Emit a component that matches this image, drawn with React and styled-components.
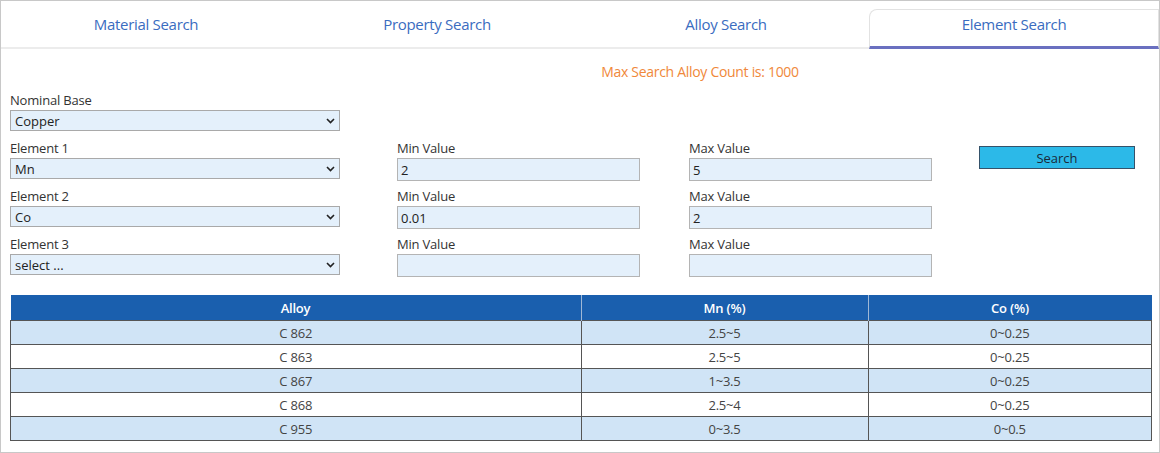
import React from "react";
import styled, { createGlobalStyle } from "styled-components";

const Global = createGlobalStyle`
  html, body { margin: 0; padding: 0; background: #fff; }
  body { font-family: "Open Sans", "Noto Sans", sans-serif; font-size: 13px; color: #222; }
`;

const Frame = styled.div`
  width: 1160px;
  height: 453px;
  box-sizing: border-box;
  border: 1px solid #c8c8c8;
  position: relative;
  overflow: hidden;
`;

const Tabs = styled.div`
  display: grid;
  grid-template-columns: 290px 292px 286px 1fr;
  height: 46px;
  border-bottom: 2px solid #ececec;
  padding-top: 0;
`;

const Tab = styled.div`
  display: flex;
  align-items: center;
  justify-content: center;
  font-size: 15px;
  letter-spacing: -0.3px;
  color: #3a6cc0;
  box-sizing: border-box;
  margin-top: ${(p) => (p.$active ? "8px" : "0")};
  padding-bottom: ${(p) => (p.$active ? "8px" : "0")};
  border: ${(p) => (p.$active ? "1px solid #e2e2e2" : "none")};
  border-bottom: ${(p) => (p.$active ? "3px solid #6a70c0" : "none")};
  border-top-left-radius: ${(p) => (p.$active ? "8px" : "0")};
  margin-bottom: ${(p) => (p.$active ? "-2px" : "0")};
`;

const Notice = styled.div`
  text-align: center;
  color: #f0883a;
  font-size: 14px;
  letter-spacing: -0.3px;
  margin: 13px 0 0 240px;
  height: 22px;
`;

const Form = styled.div`
  display: grid;
  grid-template-columns: 387px 292px 290px 160px;
  grid-auto-rows: 48px;
  padding-left: 9px;
  margin-top: 7px;
`;

const Field = styled.div`
  display: flex;
  flex-direction: column;
`;

const Label = styled.div`
  height: 18px;
  line-height: 18px;
  font-size: 13px;
  letter-spacing: -0.2px;
  color: #333;
  margin-bottom: ${(p) => p.$gap || "1px"};
`;

const SelectBox = styled.div`
  width: 330px;
  height: 21px;
  box-sizing: border-box;
  border: 1px solid #a9a9a9;
  background: #e4f0fb;
  display: flex;
  align-items: center;
  justify-content: space-between;
  padding: 0 4px 0 4px;
  font-size: 13px;
`;

const Input = styled.div`
  width: ${(p) => p.$w}px;
  height: 23px;
  box-sizing: border-box;
  border: 1px solid #b4b4b4;
  background: #e4f0fb;
  display: flex;
  align-items: center;
  padding-left: 3px;
  font-size: 13px;
`;

const Button = styled.div`
  width: 156px;
  height: 23px;
  margin-top: 7px;
  box-sizing: border-box;
  border: 1px solid #35526a;
  background: #2cb9e8;
  display: flex;
  align-items: center;
  justify-content: center;
  font-size: 13px;
  color: #1a2a3a;
`;

const Table = styled.table`
  border-collapse: collapse;
  margin: 12px 0 0 9px;
  width: 1142px;
  font-size: 13px;
  letter-spacing: -0.2px;
`;

const Th = styled.th`
  background: #1a5fae;
  color: #fff;
  font-weight: 600;
  height: 25px;
  padding: 0;
  border-right: 1px solid #9fb8d6;
  &:last-child { border-right: none; }
`;

const Td = styled.td`
  height: 23px;
  padding: 0;
  text-align: center;
  color: #444;
  border: 1px solid #555;
  background: ${(p) => (p.$odd ? "#d0e4f6" : "#fff")};
`;

const Chevron = () => (
  <svg width="9" height="6" viewBox="0 0 9 6">
    <path d="M1 1l3.5 3.5L8 1" fill="none" stroke="#222" strokeWidth="1.6" />
  </svg>
);

const Select = ({ value }) => (
  <SelectBox>
    <span>{value}</span>
    <Chevron />
  </SelectBox>
);

const rows = [
  ["C 862", "2.5~5", "0~0.25"],
  ["C 863", "2.5~5", "0~0.25"],
  ["C 867", "1~3.5", "0~0.25"],
  ["C 868", "2.5~4", "0~0.25"],
  ["C 955", "0~3.5", "0~0.5"],
];

const elements = [
  ["Element 1", "Mn", "2", "5"],
  ["Element 2", "Co", "0.01", "2"],
  ["Element 3", "select ...", "", ""],
];

export default function App() {
  return (
    <Frame>
      <Global />
      <Tabs>
        <Tab>Material Search</Tab>
        <Tab>Property Search</Tab>
        <Tab>Alloy Search</Tab>
        <Tab $active>Element Search</Tab>
      </Tabs>
      <Notice>Max Search Alloy Count is: 1000</Notice>
      <Form>
        <Field>
          <Label>Nominal Base</Label>
          <Select value="Copper" />
        </Field>
        <div />
        <div />
        <div />
        {elements.map(([name, val, min, max], i) => (
          <React.Fragment key={name}>
            <Field>
              <Label>{name}</Label>
              <Select value={val} />
            </Field>
            <Field>
              <Label>Min Value</Label>
              <Input $w={243}>{min}</Input>
            </Field>
            <Field>
              <Label>Max Value</Label>
              <Input $w={243}>{max}</Input>
            </Field>
            {i === 0 ? <Button>Search</Button> : <div />}
          </React.Fragment>
        ))}
      </Form>
      <Table>
        <thead>
          <tr>
            <Th style={{ width: 570 }}>Alloy</Th>
            <Th style={{ width: 286 }}>Mn (%)</Th>
            <Th>Co (%)</Th>
          </tr>
        </thead>
        <tbody>
          {rows.map((r, i) => (
            <tr key={r[0]}>
              {r.map((c, j) => (
                <Td key={j} $odd={i % 2 === 0}>{c}</Td>
              ))}
            </tr>
          ))}
        </tbody>
      </Table>
    </Frame>
  );
}
